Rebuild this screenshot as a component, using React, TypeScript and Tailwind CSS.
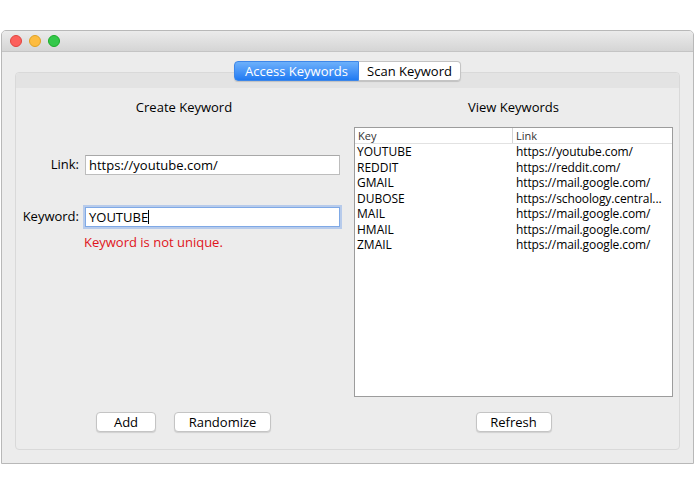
import React from "react";

const rows: [string, string][] = [
  ["YOUTUBE", "https://youtube.com/"],
  ["REDDIT", "https://reddit.com/"],
  ["GMAIL", "https://mail.google.com/"],
  ["DUBOSE", "https://schoology.central..."],
  ["MAIL", "https://mail.google.com/"],
  ["HMAIL", "https://mail.google.com/"],
  ["ZMAIL", "https://mail.google.com/"],
];

function MacButton({ label, w }: { label: string; w: string }) {
  return (
    <button
      className={`h-[20px] ${w} rounded-[4px] border border-[#c4c4c4] bg-white text-[13px] leading-[18px] text-black shadow-[0_1px_1px_rgba(0,0,0,0.12)]`}
    >
      {label}
    </button>
  );
}

export default function App() {
  return (
    <div
      className="w-[695px] h-[494px] bg-white pt-[30px] px-[1px]"
      style={{ fontFamily: '"Open Sans", "Noto Sans", sans-serif' }}
    >
      <div className="h-[434px] rounded-t-[5px] border border-[#b8b8b8] bg-[#ececec] flex flex-col overflow-hidden">
        {/* Title bar */}
        <div className="h-[21px] shrink-0 bg-gradient-to-b from-[#ebebeb] to-[#d5d5d5] border-b border-[#c4c4c4] flex items-center gap-[7px] pl-[8px]">
          <span className="w-[12px] h-[12px] rounded-full bg-[#fc605c] border border-[#e0443e]" />
          <span className="w-[12px] h-[12px] rounded-full bg-[#fdbc40] border border-[#dea123]" />
          <span className="w-[12px] h-[12px] rounded-full bg-[#34c84a] border border-[#1aab29]" />
        </div>

        {/* Body */}
        <div className="flex-1 flex flex-col px-[13px] pt-[9px] pb-[15px]">
          <div className="flex justify-center relative z-10">
            <div className="flex h-[20px] text-[13px] leading-[18px] shadow-[0_1px_1px_rgba(0,0,0,0.15)] rounded-[4px]">
              <div className="w-[125px] rounded-l-[4px] bg-gradient-to-b from-[#6cb0fb] to-[#1f7af2] border border-[#3d86e8] text-white text-center">
                Access Keywords
              </div>
              <div className="w-[102px] rounded-r-[4px] bg-white border border-l-0 border-[#c4c4c4] text-black text-center">
                Scan Keyword
              </div>
            </div>
          </div>

          <div className="mt-[-9px] flex-1 rounded-[4px] border border-[#d9d9d9] bg-[#ececec] flex flex-col">
            <div className="h-[15px] bg-[#e3e3e3] rounded-t-[4px] shrink-0" />
            <div className="flex flex-1">
              {/* Left column */}
              <div className="w-[334px] flex flex-col pt-[11px] pb-[17px]">
                <div className="text-center text-[13px] leading-[16px] text-black pl-[2px]">Create Keyword</div>
                <div className="mt-[40px] flex items-center">
                  <div className="w-[63px] text-right text-[13px] text-black">Link:</div>
                  <div className="ml-[6px] w-[255px] h-[20px] border border-[#bdbdbd] border-t-[#a8a8a8] bg-white text-[13px] leading-[18px] pl-[3px] text-black">
                    https://youtube.com/
                  </div>
                </div>
                <div className="mt-[32px] flex items-center">
                  <div className="w-[63px] text-right text-[13px] text-black">Keyword:</div>
                  <div className="ml-[6px] w-[255px] h-[20px] border border-[#7fa9e6] shadow-[0_0_0_2px_rgba(120,165,235,0.45)] bg-white text-[13px] leading-[18px] pl-[3px] text-black flex items-center">
                    <span>YOUTUBE</span>
                    <span className="w-[1px] h-[14px] bg-black" />
                  </div>
                </div>
                <div className="mt-[7px] pl-[68px] text-[13px] leading-[16px] text-[#e0141b]">
                  Keyword is not unique.
                </div>
                <div className="mt-auto flex gap-[18px] pl-[80px]">
                  <MacButton label="Add" w="w-[60px]" />
                  <MacButton label="Randomize" w="w-[97px]" />
                </div>
              </div>

              {/* Right column */}
              <div className="flex-1 flex flex-col pt-[11px] pb-[17px] pl-[4px] pr-[6px]">
                <div className="text-center text-[13px] leading-[16px] text-black">View Keywords</div>
                <div className="mt-[12px] h-[270px] border border-[#9c9c9c] bg-white text-[12px] text-black overflow-hidden">
                  <div className="flex h-[16px] leading-[15px] text-[11px] text-[#333] border-b border-[#e2e2e2]">
                    <div className="w-[158px] pl-[3px] border-r border-[#d4d4d4]">Key</div>
                    <div className="pl-[3px]">Link</div>
                  </div>
                  {rows.map(([k, l]) => (
                    <div key={k} className="flex h-[15.5px] leading-[15.5px]">
                      <div className="w-[158px] pl-[2px]">{k}</div>
                      <div className="pl-[3px] whitespace-nowrap tracking-[-0.1px]">{l}</div>
                    </div>
                  ))}
                </div>
                <div className="mt-[15px] flex justify-center">
                  <MacButton label="Refresh" w="w-[76px]" />
                </div>
              </div>
            </div>
          </div>
        </div>
      </div>
    </div>
  );
}
